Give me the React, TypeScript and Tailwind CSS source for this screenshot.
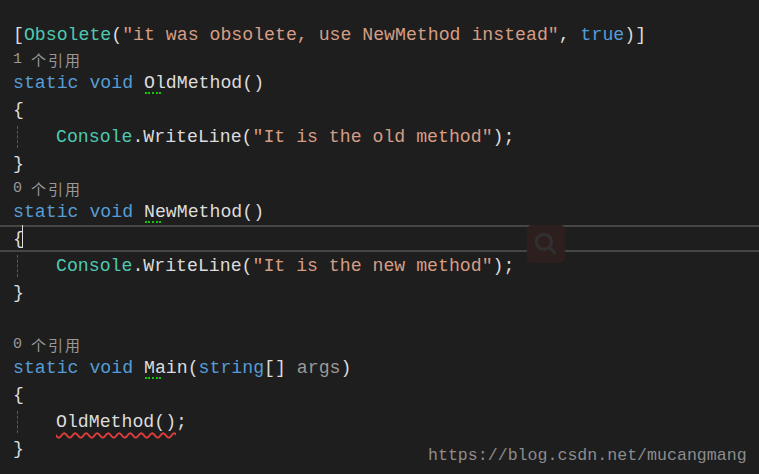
import React from 'react';

const mono = { fontFamily: '"Liberation Mono", "Noto Sans CJK SC", monospace' };

const Kw: React.FC<{ children: React.ReactNode }> = ({ children }) => (
  <span className="text-[#569cd6]">{children}</span>
);
const Ty: React.FC<{ children: React.ReactNode }> = ({ children }) => (
  <span className="text-[#4ec9b0]">{children}</span>
);
const Str: React.FC<{ children: React.ReactNode }> = ({ children }) => (
  <span className="text-[#d69d85]">{children}</span>
);

const Line: React.FC<{ children?: React.ReactNode; indent?: boolean; current?: boolean }> = ({
  children,
  indent,
  current,
}) => (
  <div
    className={`flex items-center h-[27px] pl-[13px] whitespace-pre ${
      current ? 'border-y-2 border-[#464646]' : ''
    }`}
  >
    {indent && (
      <span className="ml-[4px] w-[39px] h-[22px] border-l border-dashed border-[#5a5a5a]" />
    )}
    <span className="relative top-[1px]">{children}</span>
  </div>
);

const Lens: React.FC<{ n: number }> = ({ n }) => (
  <div className="flex items-end h-[21px] pl-[13px] text-[15px] text-[#999999] leading-[18px] whitespace-pre">
    <span>{n} </span>
    <span className="text-[15px] tracking-[2px]" style={{ fontFamily: '"Noto Sans CJK SC", sans-serif' }}>
      个引用
    </span>
  </div>
);

// green "suggestion" dots under the first letters of a name
const Hint: React.FC<{ children: React.ReactNode }> = ({ children }) => (
  <span className="relative">
    {children}
    <span className="absolute left-[1px] w-[16px] bottom-[-1px] border-b-2 border-dotted border-[#16c60c]" />
  </span>
);

export default function App() {
  return (
    <div
      className="relative w-[759px] h-[474px] overflow-hidden bg-[#1e1e1e] pt-[21px] text-[18.2px] text-[#dcdcdc]"
      style={mono}
    >
      <Line>
        [<Ty>Obsolete</Ty>(<Str>"it was obsolete, use NewMethod instead"</Str>, <Kw>true</Kw>)]
      </Line>
      <Lens n={1} />
      <Line>
        <Kw>static</Kw> <Kw>void</Kw> <Hint>Ol</Hint>dMethod()
      </Line>
      <Line>{'{'}</Line>
      <Line indent>
        <Ty>Console</Ty>.WriteLine(<Str>"It is the old method"</Str>);
      </Line>
      <Line>{'}'}</Line>
      <Lens n={0} />
      <Line>
        <Kw>static</Kw> <Kw>void</Kw> <Hint>Ne</Hint>wMethod()
      </Line>
      <Line current>
        {'{'}
        <span className="absolute left-[9px] top-[-1px] w-px h-[23px] bg-[#dcdcdc]" />
      </Line>
      <Line indent>
        <Ty>Console</Ty>.WriteLine(<Str>"It is the new method"</Str>);
      </Line>
      <Line>{'}'}</Line>
      <Line />
      <Lens n={0} />
      <Line>
        <Kw>static</Kw> <Kw>void</Kw> <Hint>Ma</Hint>in(<Kw>string</Kw>[] <span className="text-[#9a9a9a]">args</span>)
      </Line>
      <Line>{'{'}</Line>
      <Line indent>
        <span className="underline decoration-wavy decoration-[#e03c3c] decoration-[1.5px] underline-offset-[5px]">
          OldMethod()
        </span>
        ;
      </Line>
      <Line>{'}'}</Line>

      {/* search overlay */}
      <div className="absolute left-[527px] top-[225px] w-[38px] h-[38px] rounded-[5px] bg-[#2e1f1f] flex items-center justify-center">
        <svg width="26" height="26" viewBox="0 0 24 24" fill="none" stroke="#303030" strokeWidth="3" strokeLinecap="round">
          <circle cx="10" cy="10" r="7" />
          <path d="M15 15l5 5" />
        </svg>
      </div>

      <div className="absolute left-[428px] top-[444px] text-[16.6px] text-[#8c8c8c]">
        https://blog.csdn.net/mucangmang
      </div>
    </div>
  );
}
